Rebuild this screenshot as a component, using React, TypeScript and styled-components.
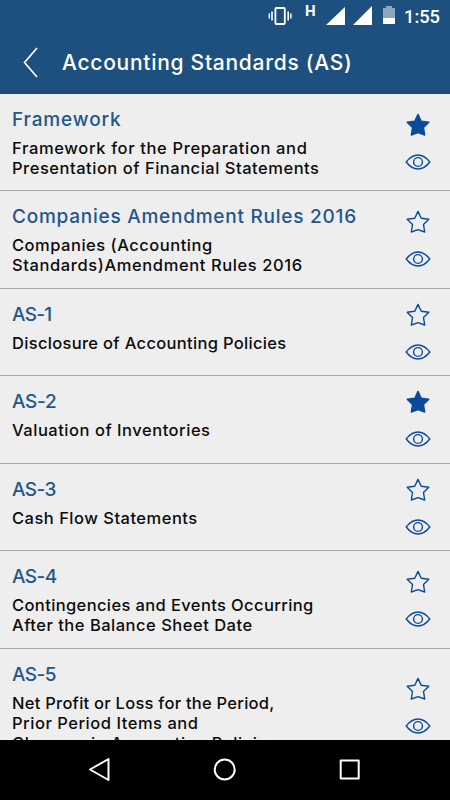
import React from 'react';
import styled, { createGlobalStyle } from 'styled-components';

const NAVY = '#1e507f';
const ICON_BLUE = '#0b4a98';

const GlobalStyle = createGlobalStyle`
  * { box-sizing: border-box; }
  html, body { margin: 0; padding: 0; }
  body { font-family: Inter, "Open Sans", sans-serif; background: #000; }
`;

const Screen = styled.div`
  display: flex;
  flex-direction: column;
  width: 450px;
  height: 800px;
  overflow: hidden;
`;

const Top = styled.header`
  flex: none;
  height: 94px;
  background: ${NAVY};
  border-bottom: 5px solid #1d4b80;
  color: #fff;
`;

const StatusBar = styled.div`
  display: flex;
  justify-content: flex-end;
  height: 32px;
  padding-right: 10px;
`;

const StatusIcon = styled.svg<{ $width: number; $gap: number }>`
  flex: none;
  width: ${(p) => p.$width}px;
  height: 32px;
  margin-right: ${(p) => p.$gap}px;
`;

const NetworkLabel = styled.span`
  width: 21px;
  font: 700 15px/23px Roboto, sans-serif;
`;

const Clock = styled.time`
  width: 36px;
  font: 500 18.3px/33px Roboto, sans-serif;
  white-space: nowrap;
`;

const AppBar = styled.div`
  display: flex;
  align-items: center;
  height: 61px;
  padding-left: 22px;
`;

const BackIcon = styled.svg`
  flex: none;
  width: 18px;
  height: 34px;
  margin-right: 22px;
`;

const Title = styled.h1`
  margin: 1px 0 0;
  font-size: 21px;
  font-weight: 500;
  line-height: 30px;
  letter-spacing: 0.727px;
  white-space: nowrap;
`;

const List = styled.main`
  flex: none;
  height: 646px;
  overflow: hidden;
  background: #eeeeee;
`;

const Row = styled.article<{ $height: number }>`
  display: flex;
  align-items: center;
  justify-content: space-between;
  height: ${(p) => p.$height}px;
  padding: 0 19px 0 12px;
  border-bottom: 1px solid #a6a6a6;
`;

const RowText = styled.div`
  align-self: flex-start;
  padding-top: 14px;
  white-space: nowrap;
`;

const Heading = styled.h2<{ $tracking: number }>`
  margin: 0 0 6px;
  color: #24568a;
  font-size: 19px;
  font-weight: 500;
  line-height: 24px;
  letter-spacing: ${(p) => p.$tracking}px;
`;

const Line = styled.span<{ $tracking: number }>`
  display: block;
  color: #0c0c0c;
  font-size: 16.5px;
  font-weight: 500;
  line-height: 20px;
  letter-spacing: ${(p) => p.$tracking}px;
`;

const Actions = styled.div`
  display: flex;
  flex-direction: column;
  align-items: center;
  gap: 15px;
  padding-bottom: 2px;
`;

const IconButton = styled.button`
  display: block;
  padding: 0;
  border: 0;
  background: none;
  line-height: 0;
`;

const NavBar = styled.nav`
  display: flex;
  flex: none;
  align-items: center;
  justify-content: space-between;
  height: 60px;
  padding: 0 88px 0 87px;
  background: #000;
`;

type TextLine = [text: string, tracking: number];

interface Standard {
  heading: TextLine;
  lines: TextLine[];
  height: number;
  starred?: boolean;
}

const standards: Standard[] = [
  {
    heading: ['Framework', 0.87],
    lines: [
      ['Framework for the Preparation and', 0.645],
      ['Presentation of Financial Statements', 0.519],
    ],
    height: 97,
    starred: true,
  },
  {
    heading: ['Companies Amendment Rules 2016', 0.757],
    lines: [
      ['Companies (Accounting', 0.51],
      ['Standards)Amendment Rules 2016', 0.6],
    ],
    height: 98,
  },
  { heading: ['AS-1', -0.7], lines: [['Disclosure of Accounting Policies', 0.319]], height: 87 },
  { heading: ['AS-2', -0.3], lines: [['Valuation of Inventories', 0.52]], height: 88, starred: true },
  { heading: ['AS-3', -0.6], lines: [['Cash Flow Statements', 0.49]], height: 87 },
  {
    heading: ['AS-4', -0.6],
    lines: [
      ['Contingencies and Events Occurring', 0.38],
      ['After the Balance Sheet Date', 0.5],
    ],
    height: 98,
  },
  {
    heading: ['AS-5', -0.6],
    lines: [
      ['Net Profit or Loss for the Period,', 0.256],
      ['Prior Period Items and', 0.528],
      ['Changes in Accounting Policies', 0.546],
    ],
    height: 116,
  },
];

const Star = ({ filled }: { filled?: boolean }) => (
  <svg width="26" height="26" viewBox="0 0 26 26">
    <path
      d="M13 2.4 L16.2 9.2 L23.8 10.2 L18.5 15.5 L19.7 23 L13 20.6 L6.3 23 L7.5 15.5 L2.2 10.2 L9.8 9.2 Z"
      fill={filled ? ICON_BLUE : 'none'}
      stroke={ICON_BLUE}
      strokeWidth="1.4"
      strokeLinejoin="round"
    />
  </svg>
);

const Eye = () => (
  <svg width="26" height="18" viewBox="0 0 26 18" fill="none" stroke={ICON_BLUE} strokeWidth="1.4">
    <path d="M1.2 9 Q6.6 2 13 2 Q19.4 2 24.8 9 Q19.4 16 13 16 Q6.6 16 1.2 9 Z" strokeLinejoin="round" />
    <circle cx="13" cy="9" r="4.4" />
  </svg>
);

export default function App() {
  return (
    <Screen>
      <GlobalStyle />
      <Top>
        <StatusBar>
          <StatusIcon $width={24} $gap={13} viewBox="0 0 24 32" fill="none" stroke="#fff">
            <rect x="7.4" y="8" width="9.4" height="16" rx="1" strokeWidth="1.8" />
            <path d="M4 11.5v9M20.2 11.5v9" strokeWidth="1.6" />
            <path d="M1.3 13.5v5M22.9 13.5v5" strokeWidth="1.4" />
          </StatusIcon>
          <NetworkLabel>H</NetworkLabel>
          <StatusIcon $width={19} $gap={8} viewBox="0 0 19 32">
            <path d="M0 25L19 7V25Z" fill="#fff" />
          </StatusIcon>
          <StatusIcon $width={19} $gap={11} viewBox="0 0 19 32">
            <path d="M0 25L19 6V25Z" fill="#fff" />
          </StatusIcon>
          <StatusIcon $width={12} $gap={9} viewBox="0 0 12 32">
            <path d="M0 8H3V6H9V8H12V18H0Z" fill="#8da7bf" />
            <path d="M0 18H12V24H0Z" fill="#fff" />
          </StatusIcon>
          <Clock>1:55</Clock>
        </StatusBar>
        <AppBar>
          <BackIcon viewBox="0 0 18 34" fill="none" stroke="#fff" strokeWidth="1.7">
            <path d="M15 2 L2.5 16.5 L15 31" />
          </BackIcon>
          <Title>Accounting Standards (AS)</Title>
        </AppBar>
      </Top>
      <List>
        {standards.map(({ heading, lines, height, starred }) => (
          <Row key={heading[0]} $height={height}>
            <RowText>
              <Heading $tracking={heading[1]}>{heading[0]}</Heading>
              {lines.map(([text, tracking]) => (
                <Line key={text} $tracking={tracking}>{text}</Line>
              ))}
            </RowText>
            <Actions>
              <IconButton aria-label="Bookmark"><Star filled={starred} /></IconButton>
              <IconButton aria-label="View"><Eye /></IconButton>
            </Actions>
          </Row>
        ))}
      </List>
      <NavBar>
        <svg width="24" height="26" viewBox="0 0 24 26" fill="none" stroke="#fff" strokeWidth="2" strokeLinejoin="round">
          <path d="M3 12.5 L21.5 2 V23 Z" />
        </svg>
        <svg width="24" height="24" viewBox="0 0 24 24" fill="none" stroke="#fff" strokeWidth="2">
          <circle cx="11.7" cy="11.5" r="10" />
        </svg>
        <svg width="24" height="24" viewBox="0 0 24 24" fill="none" stroke="#fff" strokeWidth="2" strokeLinejoin="round">
          <rect x="2.7" y="2.5" width="18" height="18" />
        </svg>
      </NavBar>
    </Screen>
  );
}
